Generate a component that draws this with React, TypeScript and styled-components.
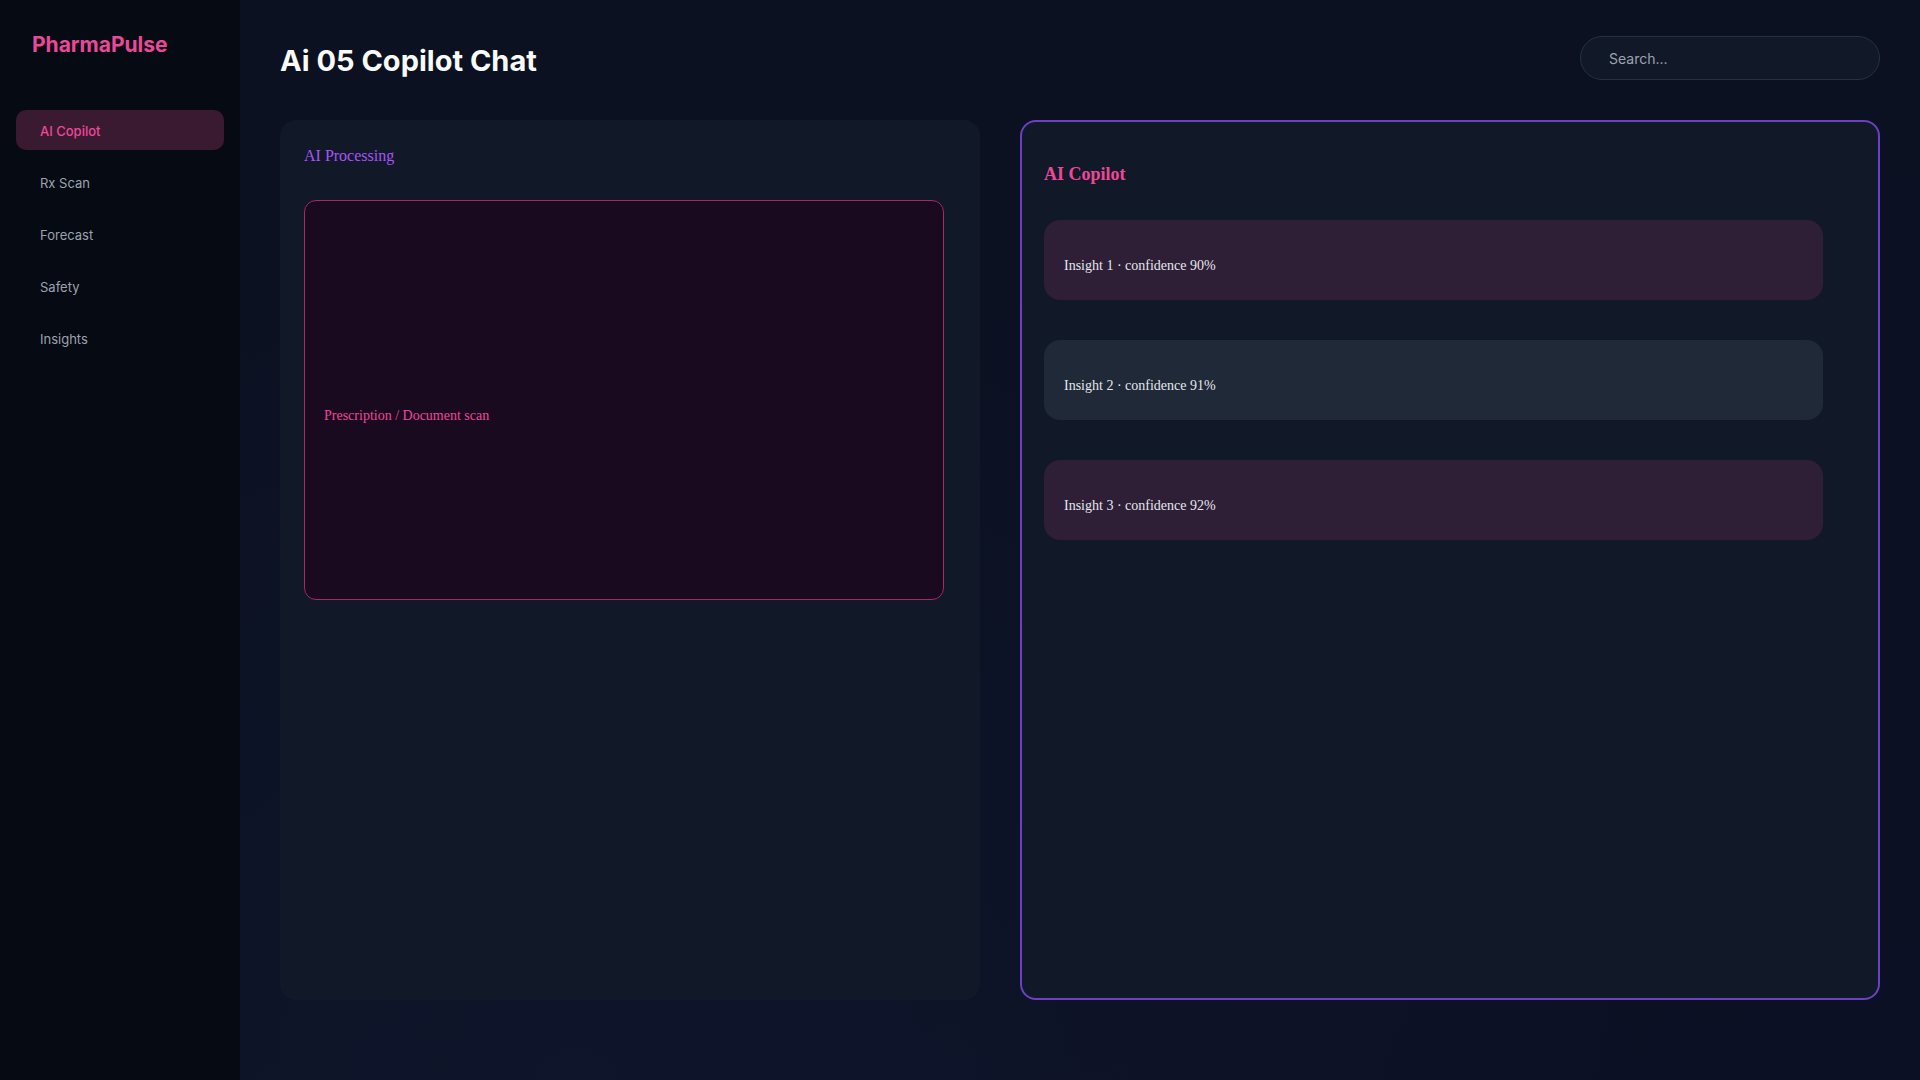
import styled, { createGlobalStyle } from "styled-components";

// Page-wide reset: dark background, no default body margin
const GlobalStyle = createGlobalStyle`
  html, body {
    margin: 0;
    padding: 0;
    background: #0b1121;
  }
  * {
    box-sizing: border-box;
  }
`;

type NavItem = { label: string; active?: boolean };

const navItems: NavItem[] = [
  { label: "AI Copilot", active: true },
  { label: "Rx Scan" },
  { label: "Forecast" },
  { label: "Safety" },
  { label: "Insights" },
];

const insights = [
  { id: 1, confidence: 90, tone: "pink" },
  { id: 2, confidence: 91, tone: "slate" },
  { id: 3, confidence: 92, tone: "pink" },
] as const;

// Full-height shell: sidebar + main column
const Shell = styled.div`
  display: flex;
  min-height: 1080px;
  width: 100%;
  font-family: Inter, "Noto Sans", sans-serif;
`;

const Sidebar = styled.aside`
  width: 240px;
  flex-shrink: 0;
  background: #060a13;
  padding: 31px 16px;
  display: flex;
  flex-direction: column;
`;

const Logo = styled.div`
  padding-left: 16px;
  font-size: 21px;
  line-height: 28px;
  font-weight: 700;
  color: #ec4899;
  margin-bottom: 51px;
`;

const Nav = styled.nav`
  display: flex;
  flex-direction: column;
  gap: 12px;
`;

const NavLink = styled.div<{ $active?: boolean }>`
  height: 40px;
  display: flex;
  align-items: center;
  padding: 2px 0 0 24px;
  border-radius: 10px;
  font-size: 13px;
  font-weight: ${(p) => (p.$active ? 500 : 400)};
  color: ${(p) => (p.$active ? "#ec4899" : "#9ca3af")};
  background: ${(p) => (p.$active ? "#3a1a30" : "transparent")};
`;

const Main = styled.main`
  flex: 1;
  padding: 36px 40px 0;
  background:
    radial-gradient(ellipse at 20% 100%, rgba(30, 41, 80, 0.18), transparent 60%),
    linear-gradient(160deg, #0b1120 0%, #0b1122 60%, #0c1024 100%);
`;

const Header = styled.header`
  height: 44px;
  display: flex;
  align-items: center;
  justify-content: space-between;
  margin-bottom: 40px;
`;

const Title = styled.h1`
  margin: 0;
  padding-top: 5px;
  font-size: 29px;
  line-height: 34px;
  font-weight: 700;
  color: #f9fafb;
`;

const Search = styled.input`
  width: 300px;
  height: 44px;
  border-radius: 22px;
  border: 1px solid #273142;
  background: #111827;
  padding: 0 28px;
  font-family: Inter, "Noto Sans", sans-serif;
  font-size: 14px;
  color: #e5e7eb;
  outline: none;

  &::placeholder {
    color: #9ca3af;
  }
`;

// Two-column work area
const Columns = styled.div`
  display: grid;
  grid-template-columns: 700px 1fr;
  gap: 40px;
`;

const Panel = styled.section<{ $outlined?: boolean }>`
  height: 880px;
  border-radius: 16px;
  background: #111827;
  border: ${(p) => (p.$outlined ? "2px solid #6d3fc2" : "none")};
  padding: ${(p) => (p.$outlined ? "22px" : "24px")};
  font-family: "Liberation Serif", "Times New Roman", serif;
`;

const PanelLabel = styled.div`
  font-size: 16px;
  line-height: 24px;
  color: #a855f7;
  margin-bottom: 32px;
`;

const ScanBox = styled.div`
  width: 640px;
  height: 400px;
  border: 1px solid #a8266a;
  border-radius: 12px;
  background: #1a0a1f;
  display: flex;
  align-items: center;
  padding: 31px 19px 0;
  font-size: 14px;
  color: #ec4899;
`;

const CopilotTitle = styled.h3`
  margin: 19px 0 35px;
  font-size: 18px;
  line-height: 22px;
  font-weight: 700;
  color: #ec4899;
`;

const InsightList = styled.div`
  display: flex;
  flex-direction: column;
  gap: 40px;
  max-width: 779px;
`;

const InsightCard = styled.div<{ $tone: "pink" | "slate" }>`
  height: 80px;
  border-radius: 16px;
  background: ${(p) => (p.$tone === "pink" ? "#2e1f37" : "#1f2937")};
  display: flex;
  align-items: center;
  padding: 12px 20px 0;
  font-size: 14px;
  color: #e5e7eb;
`;

export default function App() {
  return (
    <>
      <GlobalStyle />
      <Shell>
        <Sidebar>
          <Logo>PharmaPulse</Logo>
          <Nav>
            {navItems.map((item) => (
              <NavLink key={item.label} $active={item.active}>
                {item.label}
              </NavLink>
            ))}
          </Nav>
        </Sidebar>

        <Main>
          <Header>
            <Title>Ai 05 Copilot Chat</Title>
            <Search placeholder="Search..." />
          </Header>

          <Columns>
            {/* Left: document scan area */}
            <Panel>
              <PanelLabel>AI Processing</PanelLabel>
              <ScanBox>Prescription / Document scan</ScanBox>
            </Panel>

            {/* Right: copilot insights */}
            <Panel $outlined>
              <CopilotTitle>AI Copilot</CopilotTitle>
              <InsightList>
                {insights.map((insight) => (
                  <InsightCard key={insight.id} $tone={insight.tone}>
                    Insight {insight.id} · confidence {insight.confidence}%
                  </InsightCard>
                ))}
              </InsightList>
            </Panel>
          </Columns>
        </Main>
      </Shell>
    </>
  );
}
